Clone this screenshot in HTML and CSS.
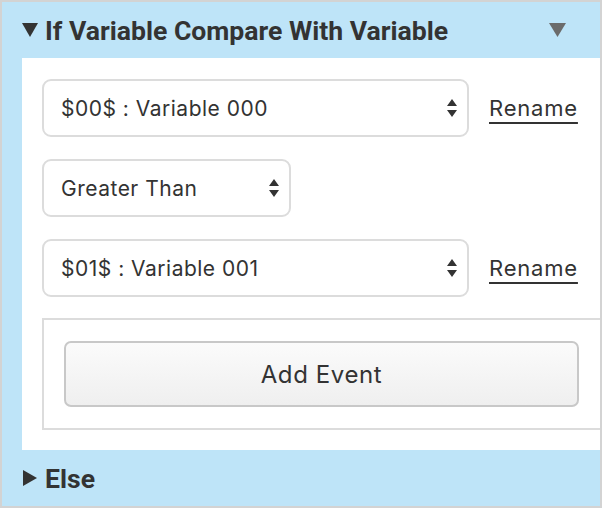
FILE: index.html
```html
<!DOCTYPE html>
<html>
<head>
<meta charset="utf-8">
<link rel="stylesheet" href="styles.css">
</head>
<body>
<div class="panel">
  <div class="bar">
    <svg class="tri" width="16" height="14" viewBox="0 0 16 14"><path d="M0 0H16L8 14Z" fill="#333"/></svg>
    <span class="bar-title">If Variable Compare With Variable</span>
    <svg class="menu-tri" width="17" height="14" viewBox="0 0 17 14"><path d="M0 0H17L8.5 14Z" fill="#6b6b6b"/></svg>
  </div>
  <div class="body">
    <div class="row">
      <div class="select wide"><span>$00$ : Variable 000</span>
        <svg class="arrows" width="10" height="18" viewBox="0 0 10 18"><path d="M5 0L10 7H0Z M0 11H10L5 18Z" fill="#333"/></svg>
      </div>
      <a class="rename">Rename</a>
    </div>
    <div class="row">
      <div class="select narrow"><span>Greater Than</span>
        <svg class="arrows" width="10" height="18" viewBox="0 0 10 18"><path d="M5 0L10 7H0Z M0 11H10L5 18Z" fill="#333"/></svg>
      </div>
    </div>
    <div class="row">
      <div class="select wide"><span>$01$ : Variable 001</span>
        <svg class="arrows" width="10" height="18" viewBox="0 0 10 18"><path d="M5 0L10 7H0Z M0 11H10L5 18Z" fill="#333"/></svg>
      </div>
      <a class="rename">Rename</a>
    </div>
    <div class="events">
      <div class="add-btn">Add Event</div>
    </div>
  </div>
  <div class="bar else">
    <svg class="tri tri-r" width="14" height="16" viewBox="0 0 14 16"><path d="M0 0L14 8L0 16Z" fill="#333"/></svg>
    <span class="bar-title">Else</span>
  </div>
</div>
</body>
</html>
```

FILE: styles.css
```css
html, body {
  margin: 0;
  padding: 0;
  background: #fff;
}
.panel {
  box-sizing: border-box;
  width: 602px;
  height: 508px;
  border: 2px solid #d3d3d3;
  background: #bee4f8;
  display: flex;
  flex-direction: column;
  overflow: hidden;
}
.bar {
  height: 56px;
  display: flex;
  align-items: center;
  padding-left: 20px;
  padding-right: 34px;
  color: #333;
  font-family: Roboto, "Liberation Sans", sans-serif;
  font-weight: 700;
  font-size: 26.6px;
  flex-shrink: 0;
}
.tri {
  display: block;
  margin-right: 7px;
}
.tri-r {
  margin-left: 1px;
  margin-right: 8px;
}
.bar-title {
  flex: 1;
}
.menu-tri {
  display: block;
}
.body {
  margin-left: 20px;
  background: #fff;
  padding: 21px 0 20px 20px;
  display: flex;
  flex-direction: column;
  gap: 22px;
  overflow: hidden;
  font-family: Inter, "Open Sans", sans-serif;
  color: #333;
}
.row {
  display: flex;
  align-items: center;
  gap: 20px;
}
.select {
  box-sizing: border-box;
  height: 58px;
  border: 2px solid #dcdcdc;
  border-radius: 9px;
  display: flex;
  align-items: center;
  justify-content: space-between;
  padding: 0 10px 0 17px;
  font-size: 21px;
  letter-spacing: 0.5px;
}
.select.wide { width: 427px; }
.select.narrow { width: 249px; }
.arrows { display: block; }
.rename {
  font-size: 22px;
  letter-spacing: 0.8px;
  text-decoration: underline;
  text-decoration-thickness: 2px;
  text-underline-offset: 6px;
  color: #333;
}
.events {
  box-sizing: border-box;
  width: 600px;
  border: 2px solid #dcdcdc;
  padding: 21px 20px 21px 20px;
  margin-top: -1px;
}
.add-btn {
  box-sizing: border-box;
  width: 515px;
  height: 66px;
  border: 2px solid #c8c8c8;
  border-radius: 7px;
  background: linear-gradient(#fbfbfb, #efefef);
  display: flex;
  align-items: center;
  justify-content: center;
  font-size: 24px;
  letter-spacing: 0.6px;
  color: #333;
}
.else {
  flex: 1;
}
```
